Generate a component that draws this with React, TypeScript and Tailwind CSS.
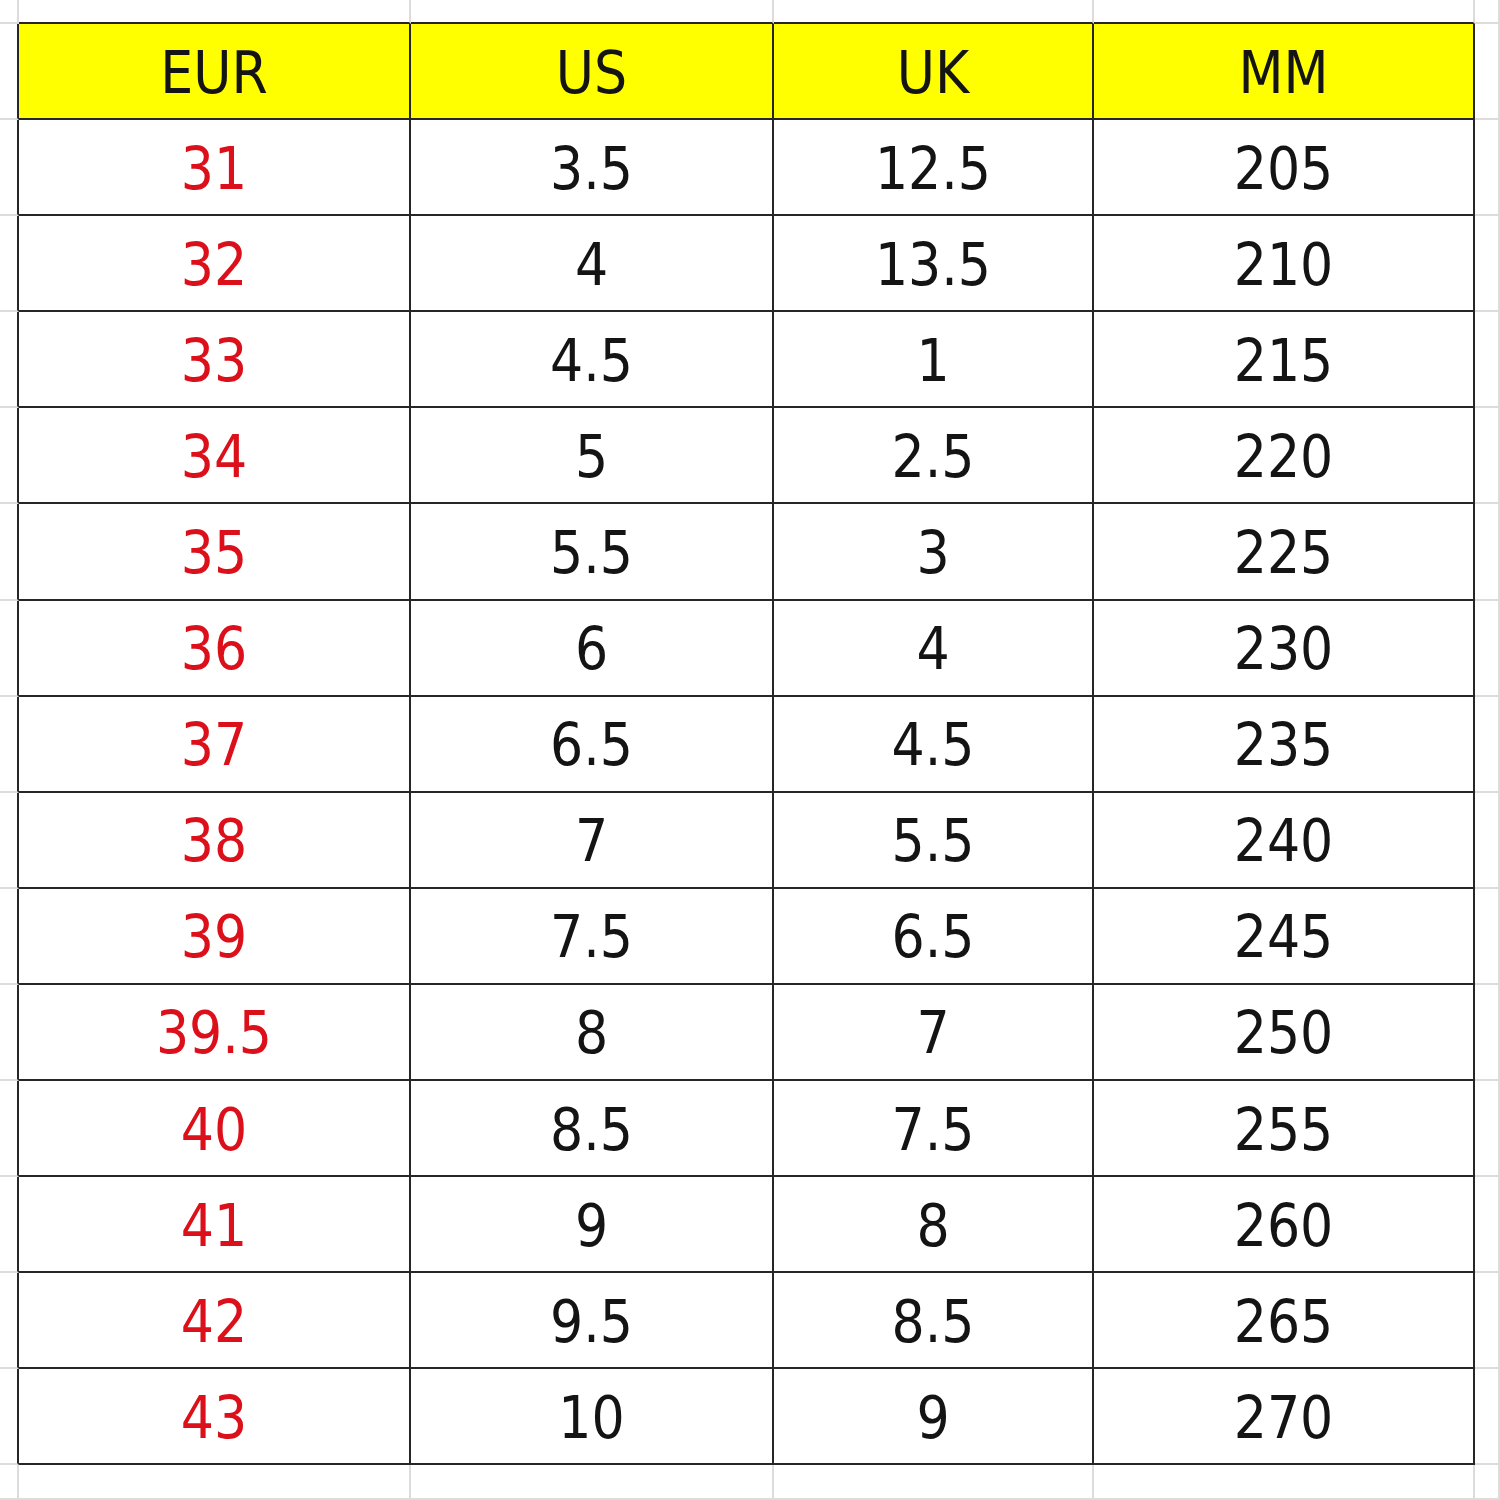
import React from 'react'

const HEADERS = ['EUR', 'US', 'UK', 'MM']

const ROWS: string[][] = [
  ['31', '3.5', '12.5', '205'],
  ['32', '4', '13.5', '210'],
  ['33', '4.5', '1', '215'],
  ['34', '5', '2.5', '220'],
  ['35', '5.5', '3', '225'],
  ['36', '6', '4', '230'],
  ['37', '6.5', '4.5', '235'],
  ['38', '7', '5.5', '240'],
  ['39', '7.5', '6.5', '245'],
  ['39.5', '8', '7', '250'],
  ['40', '8.5', '7.5', '255'],
  ['41', '9', '8', '260'],
  ['42', '9.5', '8.5', '265'],
  ['43', '10', '9', '270'],
]

// sheet is 17 rows x 6 cols; the table sits in rows 1..15, cols 1..4
const inTable = (r: number, c: number) => r >= 1 && r <= 15 && c >= 1 && c <= 4

function cellText(r: number, c: number) {
  if (!inTable(r, c)) return null
  if (r === 1) return { text: HEADERS[c - 1], red: false }
  return { text: ROWS[r - 2][c - 1], red: c === 1 }
}

export default function App() {
  const cells = []
  for (let r = 0; r < 17; r++) {
    for (let c = 0; c < 6; c++) {
      const darkRight = inTable(r, c) || inTable(r, c + 1)
      const darkBottom = inTable(r, c) || inTable(r + 1, c)
      const content = cellText(r, c)
      cells.push(
        <div
          key={`${r}-${c}`}
          className={[
            'flex items-center justify-center border-r-2 border-b-2',
            darkRight ? 'border-r-[#262626]' : 'border-r-[#dcdcdc]',
            darkBottom ? 'border-b-[#262626]' : 'border-b-[#dcdcdc]',
            r === 1 && inTable(r, c) ? 'bg-[#ffff00]' : 'bg-white',
          ].join(' ')}
        >
          {content && (
            <span
              className={
                content.red
                  ? 'pt-[3px] text-[58px] leading-none text-[#dc101a]'
                  : 'pt-[3px] text-[58px] leading-none text-[#141414]'
              }
            >
              {content.text}
            </span>
          )}
        </div>
      )
    }
  }

  return (
    <div
      className="grid h-[1500px] w-[1500px] grid-cols-[19px_392px_363px_320px_381px_1fr] grid-rows-[24px_repeat(15,96.1px)_1fr] overflow-hidden bg-white"
      style={{ fontFamily: '"DejaVu Sans Condensed", Tahoma, "DejaVu Sans", sans-serif' }}
    >
      {cells}
    </div>
  )
}
